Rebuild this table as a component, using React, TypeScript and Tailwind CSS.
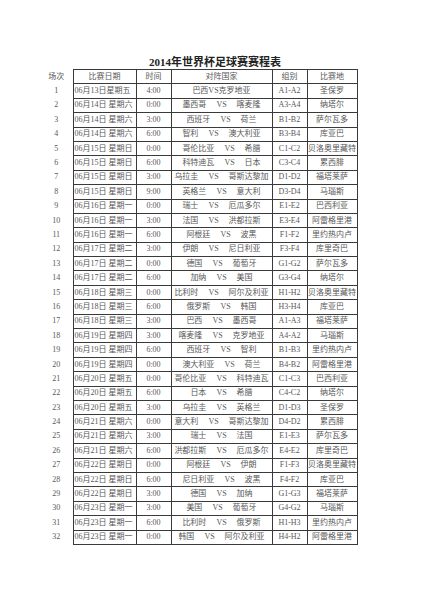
import React from 'react';

type Match = [string, string, string, string, string, string];

const matches: Match[] = [
  ['06月13日星期五', '4:00', '巴西VS克罗地亚', '', 'A1-A2', '圣保罗'],
  ['06月14日 星期六', '0:00', '墨西哥', '喀麦隆', 'A3-A4', '纳塔尔'],
  ['06月14日 星期六', '3:00', '西班牙', '荷兰', 'B1-B2', '萨尔瓦多'],
  ['06月14日 星期六', '6:00', '智利', '澳大利亚', 'B3-B4', '库亚巴'],
  ['06月15日 星期日', '0:00', '哥伦比亚', '希腊', 'C1-C2', '贝洛奥里藏特'],
  ['06月15日 星期日', '6:00', '科特迪瓦', '日本', 'C3-C4', '累西腓'],
  ['06月15日 星期日', '3:00', '乌拉圭', '哥斯达黎加', 'D1-D2', '福塔莱萨'],
  ['06月15日 星期日', '9:00', '英格兰', '意大利', 'D3-D4', '马瑙斯'],
  ['06月16日 星期一', '0:00', '瑞士', '厄瓜多尔', 'E1-E2', '巴西利亚'],
  ['06月16日 星期一', '3:00', '法国', '洪都拉斯', 'E3-E4', '阿雷格里港'],
  ['06月16日 星期一', '6:00', '阿根廷', '波黑', 'F1-F2', '里约热内卢'],
  ['06月17日 星期二', '3:00', '伊朗', '尼日利亚', 'F3-F4', '库里奇巴'],
  ['06月17日 星期二', '0:00', '德国', '葡萄牙', 'G1-G2', '萨尔瓦多'],
  ['06月17日 星期二', '6:00', '加纳', '美国', 'G3-G4', '纳塔尔'],
  ['06月18日 星期三', '0:00', '比利时', '阿尔及利亚', 'H1-H2', '贝洛奥里藏特'],
  ['06月18日 星期三', '6:00', '俄罗斯', '韩国', 'H3-H4', '库亚巴'],
  ['06月18日 星期三', '3:00', '巴西', '墨西哥', 'A1-A3', '福塔莱萨'],
  ['06月19日 星期四', '3:00', '喀麦隆', '克罗地亚', 'A4-A2', '马瑙斯'],
  ['06月19日 星期四', '6:00', '西班牙', '智利', 'B1-B3', '里约热内卢'],
  ['06月19日 星期四', '0:00', '澳大利亚', '荷兰', 'B4-B2', '阿雷格里港'],
  ['06月20日 星期五', '0:00', '哥伦比亚', '科特迪瓦', 'C1-C3', '巴西利亚'],
  ['06月20日 星期五', '6:00', '日本', '希腊', 'C4-C2', '纳塔尔'],
  ['06月20日 星期五', '3:00', '乌拉圭', '英格兰', 'D1-D3', '圣保罗'],
  ['06月21日 星期六', '0:00', '意大利', '哥斯达黎加', 'D4-D2', '累西腓'],
  ['06月21日 星期六', '3:00', '瑞士', '法国', 'E1-E3', '萨尔瓦多'],
  ['06月21日 星期六', '6:00', '洪都拉斯', '厄瓜多尔', 'E4-E2', '库里奇巴'],
  ['06月22日 星期日', '0:00', '阿根廷', '伊朗', 'F1-F3', '贝洛奥里藏特'],
  ['06月22日 星期日', '6:00', '尼日利亚', '波黑', 'F4-F2', '库亚巴'],
  ['06月22日 星期日', '3:00', '德国', '加纳', 'G1-G3', '福塔莱萨'],
  ['06月23日 星期一', '3:00', '美国', '葡萄牙', 'G4-G2', '马瑙斯'],
  ['06月23日 星期一', '6:00', '比利时', '俄罗斯', 'H1-H3', '里约热内卢'],
  ['06月23日 星期一', '0:00', '韩国', '阿尔及利亚', 'H4-H2', '阿雷格里港'],
];

const font = { fontFamily: '"Liberation Serif", "Noto Sans CJK SC", serif' };

export default function App() {
  const cell = 'border border-[#3a3a3a] p-0 text-center align-middle overflow-hidden whitespace-nowrap';

  return (
    <div className="w-[424px] h-[600px] bg-white pt-[56px] text-[#585858]" style={font}>
      {/* Title */}
      <div className="ml-[73px] w-[284px] h-[13px] text-center text-[11px] leading-[13px] font-bold text-[#222]">
        2014年世界杯足球赛赛程表
      </div>

      {/* Schedule table */}
      <table className="ml-[40px] border-collapse table-fixed text-[8px] leading-[10px]">
        <colgroup>
          <col className="w-[33px]" />
          <col className="w-[63px]" />
          <col className="w-[35px]" />
          <col className="w-[101px]" />
          <col className="w-[35px]" />
          <col className="w-[50px]" />
        </colgroup>
        <thead>
          <tr className="h-[14.4px]">
            <th className="p-0 font-normal text-center border-r border-[#3a3a3a]">场次</th>
            <th className={`${cell} font-normal border-t-[1.5px] border-l-[1.5px]`}>比赛日期</th>
            <th className={`${cell} font-normal border-t-[1.5px]`}>时间</th>
            <th className={`${cell} font-normal border-t-[1.5px]`}>对阵国家</th>
            <th className={`${cell} font-normal border-t-[1.5px]`}>组别</th>
            <th className={`${cell} font-normal border-t-[1.5px] border-r-[1.5px]`}>比赛地</th>
          </tr>
        </thead>
        <tbody>
          {matches.map(([date, time, home, away, group, venue], i) => {
            const last = i === matches.length - 1;
            const bottom = last ? 'border-b-[1.5px]' : '';
            return (
              <tr key={i} className="h-[14.4px]">
                <td className="p-0 text-center border-r border-[#3a3a3a]">{i + 1}</td>
                <td className={`${cell} ${bottom} border-l-[1.5px] text-left`}>
                  <div className="w-[62px] overflow-hidden whitespace-pre pl-[1px]">{date}</div>
                </td>
                <td className={`${cell} ${bottom}`}>{time}</td>
                <td className={`${cell} ${bottom}`}>
                  {away ? (
                    <div className="flex justify-center gap-[10px]">
                      <span>{home}</span>
                      <span>VS</span>
                      <span>{away}</span>
                    </div>
                  ) : (
                    home
                  )}
                </td>
                <td className={`${cell} ${bottom}`}>{group}</td>
                <td className={`${cell} ${bottom} border-r-[1.5px]`}>{venue}</td>
              </tr>
            );
          })}
        </tbody>
      </table>
    </div>
  );
}
